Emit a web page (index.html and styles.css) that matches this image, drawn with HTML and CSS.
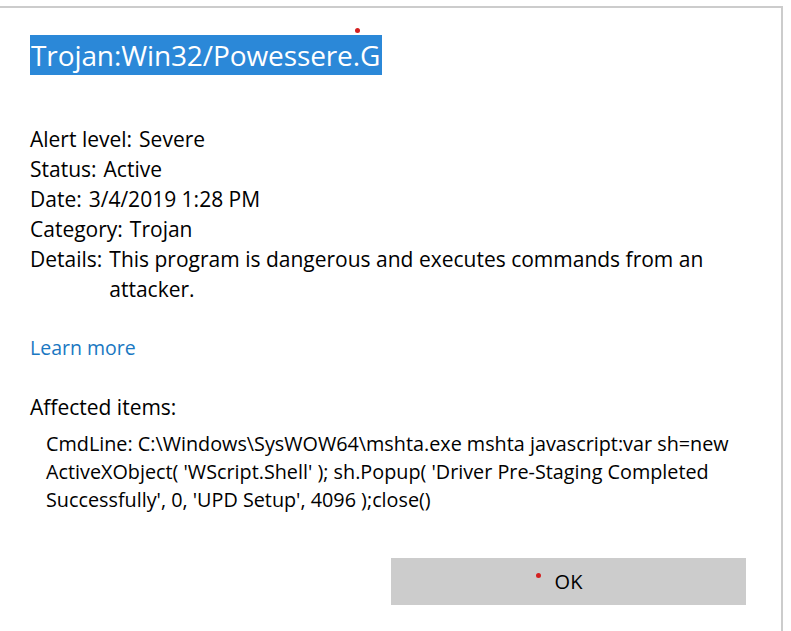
FILE: index.html
```html
<!DOCTYPE html>
<html>
<head>
<meta charset="utf-8">
<link rel="stylesheet" href="styles.css">
</head>
<body>
<div class="frame">
  <div class="content">
    <div class="title-row">
      <span class="title">Trojan:Win32/Powessere.G</span>
      <span class="dot dot-title"></span>
    </div>
    <div class="props">
      <div class="prop"><span class="label">Alert level:</span><span class="value">Severe</span></div>
      <div class="prop"><span class="label">Status:</span><span class="value">Active</span></div>
      <div class="prop"><span class="label">Date:</span><span class="value">3/4/2019 1:28 PM</span></div>
      <div class="prop"><span class="label">Category:</span><span class="value">Trojan</span></div>
      <div class="prop"><span class="label">Details:</span><span class="value wrap">This program is dangerous and executes commands from an attacker.</span></div>
    </div>
    <a class="learn" href="#">Learn more</a>
    <div class="affected">Affected items:</div>
    <div class="cmd">CmdLine: C:\Windows\SysWOW64\mshta.exe mshta javascript:var sh=new ActiveXObject( 'WScript.Shell' ); sh.Popup( 'Driver Pre-Staging Completed Successfully', 0, 'UPD Setup', 4096 );close()</div>
    <div class="actions">
      <button class="ok"><span class="dot dot-ok"></span>OK</button>
    </div>
  </div>
</div>
</body>
</html>
```

FILE: styles.css
```css
html, body {
  margin: 0;
  padding: 0;
  background: #ffffff;
}
body {
  font-family: "Open Sans", "Noto Sans", sans-serif;
  color: #000000;
  width: 791px;
  height: 631px;
  overflow: hidden;
}
.frame {
  margin-top: 6px;
  width: 783px;
  height: 625px;
  box-sizing: border-box;
  border-top: 2px solid #cccccc;
  border-right: 2px solid #cccccc;
}
.content {
  padding: 27px 36px 0 30px;
}
.title-row {
  position: relative;
  height: 40px;
}
.title {
  display: inline-block;
  background: #2b88d8;
  color: #ffffff;
  font-size: 28px;
  line-height: 40px;
  padding: 0 2px 0 1px;
  letter-spacing: -0.1px;
}
.dot {
  position: absolute;
  width: 5px;
  height: 5px;
  border-radius: 50%;
  background: #d42020;
}
.dot-title {
  left: 325px;
  top: -7px;
}
.props {
  margin-top: 49px;
  font-size: 21px;
  line-height: 30px;
}
.prop {
  display: flex;
  gap: 7px;
}
.value.wrap {
  width: 610px;
}
.learn {
  display: block;
  margin-top: 29px;
  color: #1a78c2;
  text-decoration: none;
  font-size: 19.5px;
  line-height: 30px;
  width: max-content;
}
.affected {
  margin-top: 29px;
  font-size: 21px;
  line-height: 30px;
}
.cmd {
  margin-top: 8px;
  padding-left: 16px;
  font-size: 19.8px;
  line-height: 28px;
  width: 692px;
}
.actions {
  display: flex;
  justify-content: flex-end;
  margin-top: 44px;
}
.ok {
  position: relative;
  width: 355px;
  height: 47px;
  margin-right: -1px;
  border: none;
  background: #cccccc;
  font-family: inherit;
  font-size: 20px;
  color: #000000;
  padding: 0;
}
.dot-ok {
  left: 145px;
  top: 15px;
}
```
